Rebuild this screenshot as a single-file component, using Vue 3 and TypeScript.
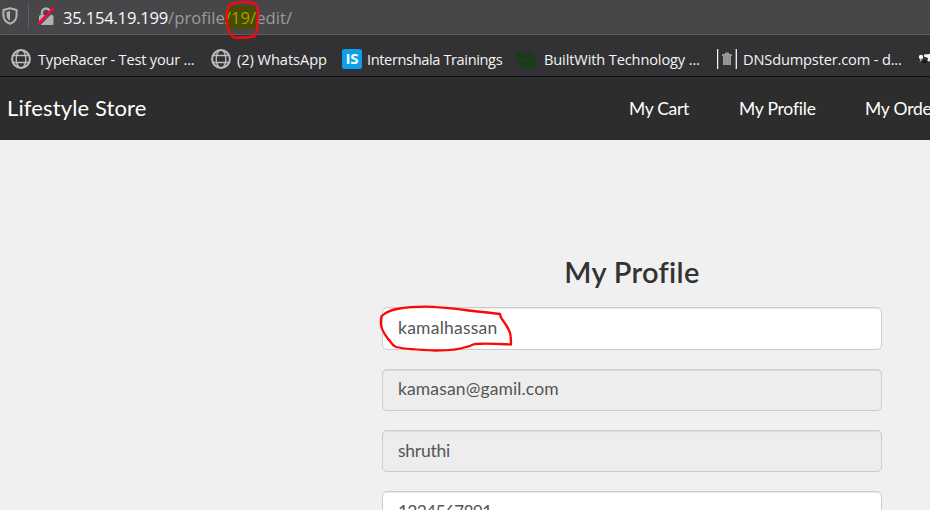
<script setup lang="ts">
interface Bookmark {
  icon: 'globe' | 'is' | 'built' | 'dump' | 'bird'
  label: string
  cls: string
}

const bookmarks: Bookmark[] = [
  { icon: 'globe', label: 'TypeRacer - Test your ...', cls: 'b1' },
  { icon: 'globe', label: '(2) WhatsApp', cls: 'b2' },
  { icon: 'is', label: 'Internshala Trainings', cls: 'b3' },
  { icon: 'built', label: 'BuiltWith Technology ...', cls: 'b4' },
  { icon: 'dump', label: 'DNSdumpster.com - d...', cls: 'b5' },
  { icon: 'bird', label: '', cls: 'b6' },
]

interface Field {
  value: string
  cls: string
}

const fields: Field[] = [
  { value: 'kamalhassan', cls: 'name' },
  { value: 'kamasan@gamil.com', cls: 'email locked' },
  { value: 'shruthi', cls: 'user locked' },
  { value: '1234567891', cls: 'phone' },
]
</script>

<template>
  <div class="screen">
    <div class="urlbar">
      <svg class="shield" width="16" height="18" viewBox="0 0 16 18">
        <path d="M8 1.2 14.6 3v5c0 4.4-2.700 7.300-6.600 8.800C4.100 15.300 1.400 12.400 1.400 8V3Z" fill="none" stroke="#b3b3b4" stroke-width="2" stroke-linejoin="round" />
        <path d="M8 4 4.600 5v3.200c0 2.600 1.300 4.400 3.400 5.500Z" fill="#b3b3b4" />
      </svg>
      <span class="divider"></span>
      <svg class="lock" width="18" height="20" viewBox="0 0 18 20">
        <path d="M5 10V6.500a4 4 0 0 1 8 0V10" fill="none" stroke="#b0b0b1" stroke-width="2.400" />
        <rect x="2" y="9" width="14.500" height="10" rx="1.500" fill="#b0b0b1" />
        <path d="M2.300 19.300 18 3.300" stroke="#474749" stroke-width="1.500" />
        <path d="M.8 18.200 16.800 1.700" stroke="#ff0039" stroke-width="2.400" />
      </svg>
      <span class="url"><span class="host">35.154.19.199</span><span class="path">/profile<span class="hl">/19/</span>edit/</span></span>
      <svg class="mark mark-id" width="44" height="44" viewBox="0 0 44 44">
        <path d="M8 9C9 5 12 4.500 15 4C22 2.500 31 2.500 35 5C38 8 38.500 12 38 17L37 27C36.500 33 36.500 36 34 37.500C28 38.500 20 39 14 38.500C10 36 8.500 32 7.500 26C6 19 6 14 8 9Z" />
      </svg>
    </div>

    <div class="bookmarks">
      <div v-for="b in bookmarks" :key="b.cls" class="bookmark" :class="b.cls">
        <svg v-if="b.icon === 'globe'" width="20" height="20" viewBox="0 0 20 20" fill="none" stroke="#bcbcbd">
          <circle cx="10" cy="10" r="8.900" stroke-width="2" />
          <ellipse cx="10" cy="10" rx="4.800" ry="8.900" stroke-width="1.400" />
          <path d="M2 6.500h16M2 13.500h16" stroke-width="1.400" />
        </svg>
        <svg v-else-if="b.icon === 'is'" width="20" height="20" viewBox="0 0 20 20">
          <rect width="20" height="20" rx="2.500" fill="#0aa1ea" />
          <text x="10" y="15.200" text-anchor="middle" class="is-text">IS</text>
        </svg>
        <svg v-else-if="b.icon === 'built'" width="21" height="20" viewBox="0 0 21 20">
          <text x="0" y="9.500" class="bw-text" textLength="18" lengthAdjust="spacingAndGlyphs"><tspan class="bw-big">b</tspan>uilt</text>
          <text x="2.500" y="17.800" class="bw-text" textLength="18" lengthAdjust="spacingAndGlyphs">With</text>
        </svg>
        <svg v-else-if="b.icon === 'dump'" width="20" height="20" viewBox="0 0 20 20">
          <path d="M.6 0v20M19.300 0v20" stroke="#f4f4f4" stroke-width="1.300" />
          <path d="M5 5h3V3.500h4V5h2.800v2H5ZM6 7h8v9H6Z" fill="#989898" />
          <path d="M8.500 8.500v6M11.500 8.500v6" stroke="#858585" stroke-width=".8" />
        </svg>
        <svg v-else width="12" height="20" viewBox="0 0 12 20">
          <circle cx="3" cy="8" r="2.200" fill="#f5f5f5" />
          <path d="M4 9 2 12.500" stroke="#ddd" />
          <path d="M6 5.500 12 5v7.500L9.500 12 10 9 6 7.500Z" fill="#f5f5f5" />
          <path d="M4 14 7 10 9 14Z" fill="#151515" />
        </svg>
        <span v-if="b.label" class="blabel">{{ b.label }}</span>
      </div>
    </div>

    <nav class="nav">
      <span class="brand">Lifestyle Store</span>
      <span class="link cart">My Cart</span>
      <span class="link profile">My Profile</span>
      <span class="link orders">My Orders</span>
    </nav>

    <main class="content">
      <h1 class="title"><span>My Profile</span></h1>
      <form class="form">
        <div v-for="f in fields" :key="f.cls" class="field" :class="f.cls"><span>{{ f.value }}</span></div>
        <svg class="mark mark-name" width="144" height="56" viewBox="0 0 144 56">
          <path d="M7.700 13C12 9 17 7 23 6C34 4 43 3.700 52 3.700C67 4 82 6 99 8C109 9 119 10 126 11C126 15 129 17 132 22C136 28 137 31 137 41.500C126 41 112 40 101 41C97 42 96 43.500 92 44C84 47 76 47.500 62 47.500C48 47 31 46 22 44C17 42 17 38 14 36C10 30 7.500 27 7 22C6.500 17 7 15 7.700 13Z" />
        </svg>
      </form>
    </main>
  </div>
</template>

<style>
body {
  margin: 0;
  overflow: hidden;
}
</style>

<style scoped>
.screen {
  width: 930px;
  height: 510px;
  overflow: hidden;
  display: flex;
  flex-direction: column;
  background: #f0f0f0;
}
.screen span {
  white-space: nowrap;
}
.urlbar {
  position: relative;
  z-index: 2;
  flex: none;
  box-sizing: border-box;
  height: 35px;
  background: #474749;
  border-bottom: 1px solid #5c5c5e;
  display: flex;
  align-items: flex-start;
  font-family: "Open Sans", sans-serif;
}
.shield {
  margin: 7px 0 0 2px;
}
.divider {
  width: 1px;
  height: 26px;
  margin: 3px 8px 0 10px;
  background: #5d6068;
}
.lock {
  margin-top: 6px;
}
.url {
  margin-left: 8px;
  font-size: 16.600px;
  line-height: 36px;
}
.host {
  color: #f9f9fa;
  letter-spacing: -0.220px;
}
.path {
  color: #9b9b9c;
  letter-spacing: 0.050px;
}
.hl {
  color: #a3a300;
  background: linear-gradient(#4a4a00, #4a4a00) 100% 50% / 28px 23px no-repeat;
}
.mark {
  position: absolute;
  overflow: visible;
  fill: none;
  stroke: #fb0707;
  stroke-width: 2.300;
  stroke-linejoin: round;
}
.mark-id {
  left: 220px;
  top: -1px;
}
.bookmarks {
  flex: none;
  box-sizing: border-box;
  height: 42px;
  background: #323234;
  border-bottom: 1px solid #0d0d0e;
  display: flex;
  align-items: center;
  padding: 8px 0 1px 11px;
  font-family: "Open Sans", sans-serif;
  font-size: 14.600px;
  color: #f4f4f5;
}
.bookmark {
  flex: none;
  display: flex;
  align-items: center;
  height: 20px;
}
.bookmark svg {
  flex: none;
}
.blabel {
  line-height: 20px;
}
.b1 { width: 200px; gap: 7px; letter-spacing: -0.200px; }
.b2 { width: 131px; gap: 6px; letter-spacing: -0.050px; }
.b3 { width: 174px; gap: 5px; letter-spacing: -0.380px; }
.b4 { width: 201px; gap: 7px; letter-spacing: -0.130px; }
.b5 { width: 201px; gap: 6px; letter-spacing: -0.150px; }
.is-text {
  font: bold 15px "Open Sans", sans-serif;
  letter-spacing: 0;
  fill: #fff;
}
.bw-text {
  font: bold 8px "Open Sans", sans-serif;
  letter-spacing: 0;
  fill: #0b430b;
  stroke: #0b430b;
  stroke-width: 0.500;
}
.bw-big {
  font-size: 11px;
}
.nav {
  flex: none;
  height: 63px;
  background: #2d2d2d;
  display: flex;
  align-items: center;
  color: #fff;
  font-family: Lato, sans-serif;
  font-size: 17.500px;
}
.brand {
  width: 622px;
  padding: 0 0 3px 7px;
  font-size: 22px;
  letter-spacing: 0.120px;
}
.cart { width: 110px; letter-spacing: -0.300px; }
.profile { width: 126px; letter-spacing: -0.220px; }
.orders { letter-spacing: -0.200px; }
.brand, .link { flex: none; }
.content {
  flex: 1;
  min-height: 0;
  padding: 114px 48px 0 382px;
  font-family: Lato, sans-serif;
}
.title {
  margin: 0;
  height: 53px;
  line-height: 36px;
  text-align: center;
  font-size: 29px;
  font-weight: 600;
  letter-spacing: 0.300px;
  color: #333;
}
.form {
  position: relative;
  display: flex;
  flex-direction: column;
  gap: 19px;
}
.field {
  box-sizing: border-box;
  height: 42px;
  padding-left: 15px;
  line-height: 40px;
  border: 1px solid #ccc;
  border-radius: 5px;
  background: #fff;
  box-shadow: inset 0 1px 1px rgba(0, 0, 0, 0.075);
  color: #555;
  font-size: 17.500px;
}
.name {
  height: 43px;
  letter-spacing: 0.240px;
}
.email {
  line-height: 38px;
  letter-spacing: 0.130px;
}
.user {
  letter-spacing: -0.250px;
}
.phone {
  letter-spacing: -0.800px;
}
.locked {
  background: #ededed;
}
.mark-name {
  left: -8px;
  top: -4px;
}
</style>
